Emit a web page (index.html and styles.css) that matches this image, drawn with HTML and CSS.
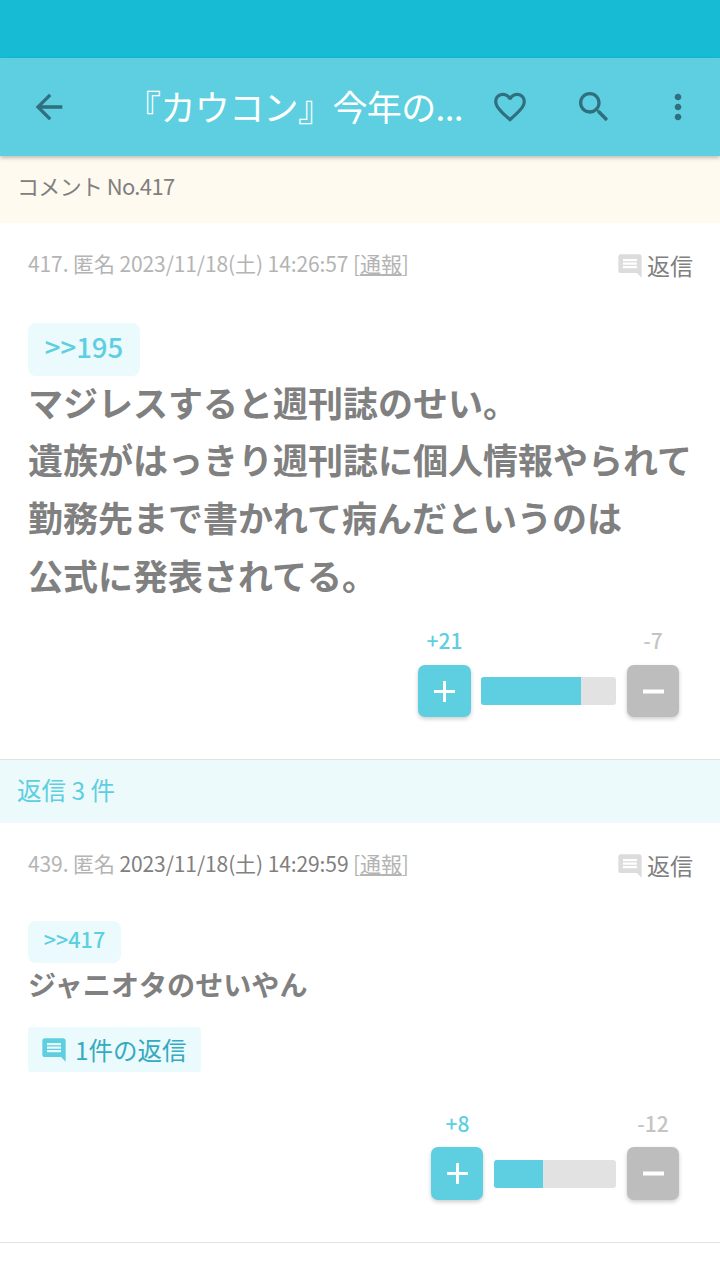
FILE: index.html
```html
<!DOCTYPE html>
<html lang="ja">
<head>
<meta charset="utf-8">
<title>コメント</title>
<link rel="stylesheet" href="styles.css">
</head>
<body>
<div class="status"></div>
<header class="bar">
  <svg class="ico back" viewBox="0 0 24 24"><path d="M20 11H7.83l5.59-5.59L12 4l-8 8 8 8 1.41-1.41L7.83 13H20v-2z"/></svg>
  <h1 class="title">『カウコン』今年の...</h1>
  <svg class="ico heart" viewBox="0 0 24 24"><path d="M16.5 3c-1.74 0-3.41.81-4.5 2.09C10.91 3.81 9.24 3 7.5 3 4.42 3 2 5.42 2 8.5c0 3.78 3.4 6.86 8.55 11.54L12 21.35l1.45-1.32C18.6 15.36 22 12.28 22 8.5 22 5.42 19.58 3 16.5 3zm-4.4 15.55l-.1.1-.1-.1C7.14 14.24 4 11.39 4 8.5 4 6.5 5.5 5 7.5 5c1.54 0 3.04.99 3.57 2.36h1.87C13.46 5.99 14.96 5 16.5 5c2 0 3.5 1.5 3.5 3.5 0 2.89-3.14 5.74-7.9 10.05z"/></svg>
  <svg class="ico search" viewBox="0 0 24 24"><path d="M15.5 14h-.79l-.28-.27C15.41 12.59 16 11.11 16 9.5 16 5.91 13.09 3 9.5 3S3 5.91 3 9.5 5.91 16 9.5 16c1.61 0 3.09-.59 4.23-1.57l.27.28v.79l5 4.99L20.49 19l-4.99-5zm-6 0C7.01 14 5 11.99 5 9.5S7.01 5 9.5 5 14 7.01 14 9.5 11.99 14 9.5 14z"/></svg>
  <svg class="ico more" viewBox="0 0 24 24"><path d="M12 8c1.1 0 2-.9 2-2s-.9-2-2-2-2 .9-2 2 .9 2 2 2zm0 2c-1.1 0-2 .9-2 2s.9 2 2 2 2-.9 2-2-.9-2-2-2zm0 6c-1.1 0-2 .9-2 2s.9 2 2 2 2-.9 2-2-.9-2-2-2z"/></svg>
</header>
<div class="notice">コメント No.417</div>

<article class="comment first">
  <div class="meta">
    <p class="info">417. 匿名 2023/11/18(土) 14:26:57 [<u>通報</u>]</p>
    <span class="reply"><svg class="chat grey" viewBox="0 0 24 24"><path d="M20 2H4c-1.1 0-2 .9-2 2v12c0 1.1.9 2 2 2h14l4 4V4c0-1.1-.9-2-2-2zm-2 12H6v-2h12v2zm0-3H6V9h12v2zm0-3H6V6h12v2z"/></svg>返信</span>
  </div>
  <span class="anchor big">&gt;&gt;195</span>
  <p class="body big">マジレスすると週刊誌のせい。<br>遺族がはっきり週刊誌に個人情報やられて<br>勤務先まで書かれて病んだというのは<br>公式に発表されてる。</p>
  <div class="vote v1">
    <div class="counts"><span class="plus-n">+21</span><span class="minus-n">-7</span></div>
    <div class="controls">
      <span class="btn plus"><svg class="glyph" viewBox="0 0 21 21"><path d="M9 0h3v9h9v3h-9v9H9v-9H0V9h9z"/></svg></span>
      <div class="track"><div class="fill" style="width:74%"></div></div>
      <span class="btn minus"><svg class="glyph" viewBox="0 0 21 21"><path d="M0 8.5h21v4H0z"/></svg></span>
    </div>
  </div>
</article>

<div class="replies">返信 3 件</div>

<article class="comment second">
  <div class="meta">
    <p class="info">439. 匿名 <span class="dark">2023/11/18(土) 14:29:59</span> [<u>通報</u>]</p>
    <span class="reply"><svg class="chat grey" viewBox="0 0 24 24"><path d="M20 2H4c-1.1 0-2 .9-2 2v12c0 1.1.9 2 2 2h14l4 4V4c0-1.1-.9-2-2-2zm-2 12H6v-2h12v2zm0-3H6V9h12v2zm0-3H6V6h12v2z"/></svg>返信</span>
  </div>
  <span class="anchor small">&gt;&gt;417</span>
  <p class="body small">ジャニオタのせいやん</p>
  <span class="thread"><svg class="chat blue" viewBox="0 0 24 24"><path d="M20 2H4c-1.1 0-2 .9-2 2v12c0 1.1.9 2 2 2h14l4 4V4c0-1.1-.9-2-2-2zm-2 12H6v-2h12v2zm0-3H6V9h12v2zm0-3H6V6h12v2z"/></svg>1件の返信</span>
  <div class="vote v2">
    <div class="counts"><span class="plus-n">+8</span><span class="minus-n">-12</span></div>
    <div class="controls">
      <span class="btn plus"><svg class="glyph" viewBox="0 0 21 21"><path d="M9 0h3v9h9v3h-9v9H9v-9H0V9h9z"/></svg></span>
      <div class="track"><div class="fill" style="width:40%"></div></div>
      <span class="btn minus"><svg class="glyph" viewBox="0 0 21 21"><path d="M0 8.5h21v4H0z"/></svg></span>
    </div>
  </div>
</article>
</body>
</html>
```
FILE: styles.css
```css
* { box-sizing: border-box; }
html, body { margin: 0; padding: 0; }
body {
  width: 720px;
  height: 1265px;
  overflow: hidden;
  background: #fff;
  font-family: "Noto Sans CJK JP", "Noto Sans", sans-serif;
  color: #777;
}
p, h1 { margin: 0; }
.status { height: 58px; background: #17bcd4; }
.bar {
  height: 98px;
  background: #5dcfe0;
  display: flex;
  align-items: center;
  box-shadow: 0 2px 4px rgba(0,0,0,.25);
  position: relative;
}
.ico { width: 40px; height: 40px; fill: #2f6f7e; flex: none; }
.back { margin-left: 29px; }
.title {
  flex: 1;
  margin-left: 57px;
  padding-bottom: 4px;
  font-size: 35px;
  font-weight: 400;
  letter-spacing: -.6px;
  color: #fff;
  white-space: nowrap;
  line-height: 1;
}
.heart { width: 38px; height: 38px; margin-right: 45px; }
.search { margin-right: 44px; }
.more { margin-right: 22px; }
.notice {
  height: 67px;
  background: #fffaf0;
  padding-left: 17px;
  font-size: 22px;
  letter-spacing: -.65px;
  line-height: 58px;
  color: #808080;
}
.comment { position: relative; padding: 0 28px; border-bottom: 1px solid #e2e2e2; }
.first { height: 537px; }
.second { height: 420px; }
.meta { display: flex; justify-content: space-between; padding-top: 26px; height: 100px; }
.second .meta { height: 98px; }
.info { font-size: 21px; line-height: 28px; letter-spacing: -.1px; color: #b4b4b4; white-space: nowrap; }
.dark { color: #808080; }
.reply { display: flex; align-items: center; height: 32px; font-size: 23px; color: #808080; margin-right: -1px; }
.chat { width: 28px; height: 28px; flex: none; }
.chat.grey { fill: #dcdcdc; margin-right: 3px; margin-top: 2px; }
.chat.blue { fill: #5dcfe0; margin-right: 7px; }
.anchor {
  display: block;
  background: #ebfafc;
  color: #5dcfe0;
  border-radius: 8px;
  text-align: center;
  font-weight: 500;
}
.anchor.big { width: 112px; height: 53px; font-size: 27.5px; line-height: 47px; }
.anchor.small { width: 93px; height: 42px; font-size: 21.5px; line-height: 36px; }
.body { font-weight: 600; color: #808080; }
.body.big { font-size: 35px; line-height: 57.67px; margin-top: -3.5px; }
.body.small { font-size: 28.1px; line-height: 42px; }
.thread {
  display: inline-flex;
  align-items: center;
  background: #ebfafc;
  color: #35aac0;
  font-size: 24.5px;
  height: 45px;
  padding: 0 14px 0 12px;
  border-radius: 3px;
  margin-top: 22px;
}
.vote { position: absolute; right: 41px; }
.v1 { top: 402px; width: 261px; }
.v2 { top: 284px; width: 248px; }
.counts { display: flex; justify-content: space-between; height: 34px; font-size: 21px; font-weight: 500; line-height: 30px; }
.v2 .counts { line-height: 32px; }
.plus-n { color: #5dcfe0; width: 53px; text-align: center; }
.minus-n { color: #c4c4c4; width: 52px; text-align: center; }
.controls { display: flex; align-items: center; margin-top: 6px; }
.btn {
  width: 53px; height: 52px; flex: none;
  border-radius: 7px;
  display: flex; align-items: center; justify-content: center;
  box-shadow: 0 2px 4px rgba(0,0,0,.2);
}
.glyph { width: 21px; height: 21px; fill: #fff; }
.plus { background: #5dcfe0; }
.minus { background: #bdbdbd; width: 52px; }
.v2 .btn { height: 53px; }
.v2 .plus { width: 52px; }
.track { flex: 1; height: 28px; margin: 0 11px 0 10px; background: #e2e2e2; border-radius: 3px; overflow: hidden; }
.v2 .track { margin-left: 11px; }
.fill { height: 100%; background: #5dcfe0; }
.replies {
  height: 63px;
  background: #ecfafc;
  color: #5dcfe0;
  font-size: 24.5px;
  line-height: 60px;
  padding-left: 17px;
}
```
